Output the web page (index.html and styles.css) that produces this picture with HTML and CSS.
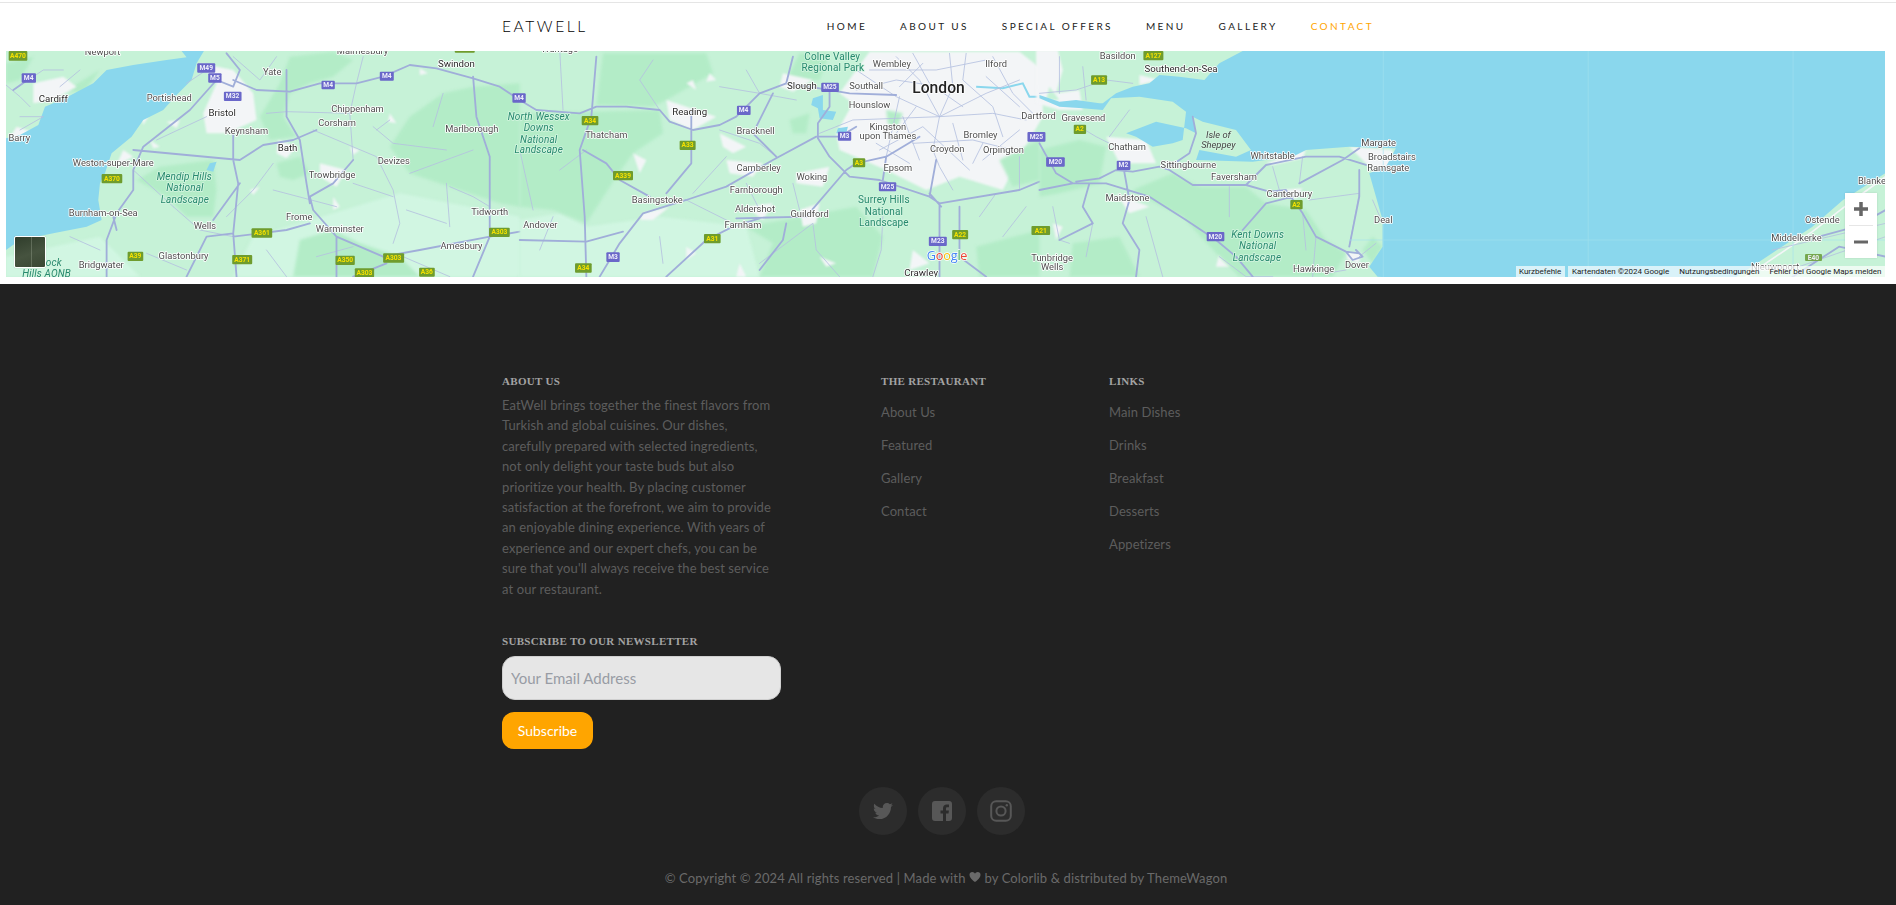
FILE: index.html
```html
<!DOCTYPE html>
<html lang="en">
<head>
<meta charset="utf-8">
<title>EatWell - Contact</title>
<link rel="stylesheet" href="styles.css">
</head>
<body>
<header class="site-header">
  <div class="header-inner">
    <a class="logo" href="#">EATWELL</a>
    <nav class="main-nav">
      <a href="#">Home</a>
      <a href="#">About Us</a>
      <a href="#">Special Offers</a>
      <a href="#">Menu</a>
      <a href="#">Gallery</a>
      <a class="active" href="#">Contact</a>
    </nav>
  </div>
</header>

<section class="map-section">
  <div class="map">
    <svg class="map-art" viewBox="6 51 1880 226" preserveAspectRatio="none" xmlns="http://www.w3.org/2000/svg">
      <rect class="land" x="6" y="51" width="1880" height="226"/>

      <!-- west -->
      <g transform="translate(0,50) scale(.33333)">
        <path class="pale" d="M700 680L760 560 900 520 1200 430 1560 500 1560 680Z M18 620L300 560 420 680 18 680Z"/>
        <path class="hill" d="M870 20L1000 5 1060 30 1000 80 930 100 870 130 850 200 890 260 810 270 780 200 840 100Z M1170 290L1230 200 1330 130 1420 110 1560 100 1560 470 1500 460 1350 410 1230 370Z M410 390L480 350 640 330 650 420 640 500 560 500 500 440Z M900 570L1000 540 1080 580 1200 620 1260 680 880 680Z M830 340L900 320 930 370 880 390 840 380Z M18 40L100 20 60 90 18 100Z M200 120L300 60 250 130Z"/>
        <path class="urban" d="M600 40L700 60 760 130 770 210 680 250 620 250 610 190 650 100Z M100 100L190 80 230 110 160 150 100 160Z M50 230L110 250 60 270 30 260Z M835 270L890 290 860 325 830 310Z M960 340L1040 360 1010 410 960 380Z M500 215L540 210 530 235Z M1050 290L1080 300 1060 315Z M1170 190L1190 220 1165 215Z M370 300L400 320 350 345Z M750 420L780 410 760 435Z M420 190L445 200 430 225Z M450 270L480 290 460 295Z M1000 440L1020 470 1000 480Z M1260 55L1285 70 1260 75Z"/>
        <path class="sea" d="M18 265L60 255 115 225 135 170 195 145 280 100 320 60 400 45 500 30 560 22 545 3 612 3 590 40 575 90 530 135 490 180 430 210 395 260 335 310 315 370 300 400 295 450 305 510 260 530 160 550 60 570 18 600Z M630 340L650 335 640 365 620 360Z"/>
        <path class="t" d="M40 120L130 60 190 60M18 105L60 140 90 170M180 110L240 60M1090 20L1070 100 1050 190 1060 330M800 190L860 185 1050 190M940 240L1130 320 1180 420 1200 520 1180 580M1170 210L1130 240M520 470L600 540 700 560M400 360L520 470M820 420L1010 470M1420 300L1230 370M1350 410L1420 440 1470 470M1210 620L1350 680M440 610L560 660M210 560L300 600M1330 130L1300 230M1340 400L1350 530M60 200L130 200 60 240M560 100L620 60M700 20L780 90 830 20M470 270L620 200M820 340L760 420 680 500M1120 230L1180 280 1340 300M1060 400L1180 440M1220 480L1340 520M950 620L1060 590M800 600L860 680"/>
        <path class="r" d="M40 120L90 85M700 90L770 120 870 125 960 100 1070 100 1150 80 1230 45 1310 55 1420 85 1500 110 1560 150M680 10L720 60 700 110 650 90 570 180 430 290 400 360 400 420 350 490 320 570 320 680M1060 330L1000 400 930 440 940 480 1010 560 1150 620 1260 600 1470 560 1560 545M860 60L860 200 900 270 920 400 930 460M700 250L700 330 715 400 700 550 710 680M640 510L720 400M400 300L720 330 790 285 880 270 950 240M700 560L860 540 930 520M1420 80L1430 200 1470 320 1470 470 1470 560 1420 680M560 680L620 560 700 550M1010 560L1010 680M1160 640L1060 680M340 500L350 540"/>
      </g>

      <!-- centre -->
      <g transform="translate(520,50) scale(.33333)">
        <path class="pale" d="M0 510L120 490 200 530 420 500 680 530 720 680 0 680Z"/>
        <path class="hill" d="M0 190L215 185 420 180 430 250 340 310 290 380 200 520 100 480 0 470Z M250 10L560 10 580 70 440 150 400 170 230 165Z M680 530L1010 470 1090 560 1060 680 720 680 760 580Z M1370 590L1560 540 1560 680 1380 680Z M800 90L840 10 930 10 900 90Z M810 210L870 190 860 250 820 250Z"/>
        <path class="urban" d="M1050 5L1500 5 1570 60 1570 200 1500 320 1450 420 1320 380 1220 420 1100 360 960 300 950 250 1000 160 960 130 1010 60Z M440 150L590 200 520 240 450 210Z M790 70L880 90 820 125 780 110Z M370 490L450 470 400 510 360 510Z M620 330L730 340 700 380 630 370Z M600 250L680 290 640 310 610 290Z M830 370L930 350 910 410 830 400Z M840 480L900 460 890 520 850 530Z M680 470L760 460 730 510Z M340 310L380 330 360 370Z M500 100L520 90 530 120Z M570 70L590 90 560 95Z M500 590L530 610 500 630Z M900 620L950 640 920 650Z M1180 600L1230 640 1170 660Z M660 640L680 680 650 680Z M1390 380L1420 350 1410 400Z"/>
        <path class="hill" d="M1100 180L1150 190 1130 240 1105 220Z M1440 330L1560 270 1560 390 1480 410Z"/>
        <path class="sea" d="M880 145L910 135 910 180 950 185 940 210 900 205 895 175 875 165Z M955 235L985 230 980 250 950 250Z"/>
        <path class="river" d="M1370 110L1450 115 1510 100 1530 140 1560 140"/>
        <path class="t" d="M120 0L130 180M400 30L360 90 420 180M680 60L720 130M1010 60L1130 140 1260 200 1400 130 1500 90M1260 200L1200 90 1130 20M1260 200L1240 300 1260 350 1300 420M1260 200L1300 110 1290 10M1140 140L1100 320M1260 200L1420 190 1520 210M1260 200L1000 210 900 250M1180 280L1360 270 1480 300M1050 60L1250 60 1400 30M1400 80L1500 170M1080 300L1210 230 1350 360M600 240L720 280 770 320M600 110L720 130 830 150M620 320L520 430M820 400L840 480M680 400L720 480M500 450L640 520M200 300L120 360M100 500L60 600M0 300L40 480M720 640L880 520 890 600 960 680M1090 500L1085 600 1060 680M1500 420L1500 320M1380 500L1430 430M1450 560L1520 470M1360 340L1390 280M420 560L430 640M1130 250L1190 170M1180 10L1230 100 1330 170M1340 10L1330 90 1420 170 1450 260M1010 120L1130 90 1260 110M1150 200L1200 330M1420 20L1480 130 1540 190M1070 280L1170 340M1300 220L1330 330M1500 240L1390 330M1210 40L1140 110"/>
        <path class="r" d="M0 150L50 180 180 190 230 170 320 170 420 180 450 215 520 240 600 225 650 200 720 130 800 100 900 115 990 130 1130 135M930 120L930 170 895 220 895 265 930 320 990 380 1080 390 1230 440 1260 460 1500 420 1560 395M240 680L300 580 370 490 500 450 620 410 760 330 890 260 960 260 1010 230M230 20L215 200 180 300 195 500 200 680M190 300L260 340 300 390 390 440M515 180L515 340 440 430M650 505L860 500 980 360 1010 340 1100 320 1200 260M1260 460L1260 680M1320 470L1320 620 1400 680M1230 430L1265 470M440 680L560 570 640 530 720 505M800 520L790 570 720 660M0 570L200 575 310 545M760 130L700 250 770 320M800 100L820 20M1100 320L1090 390M1230 440L1250 330"/>
      </g>

      <!-- east -->
      <g transform="translate(1040,50) scale(.33333)">
        <path class="urban" d="M-10 0L55 0 70 60 50 130 120 120 130 180 60 180 -10 160Z M200 260L320 270 350 340 240 340Z M300 75L360 90 300 105Z M230 430L330 470 270 490Z M930 290L1060 300 1060 350 1000 360 960 320Z M720 420L790 415 770 445 730 440Z M540 610L590 610 570 650 530 650Z M40 520L70 530 50 570Z M680 340L800 300 790 325 700 345Z M920 605L965 610 960 640 925 630Z M30 110L20 150 60 150Z"/>
        <path class="hill" d="M280 420L400 370 480 410 620 410 680 460 800 480 860 570 920 610 880 680 600 680 540 620 430 500 330 450Z M0 300L120 270 200 290 180 400 60 430 0 440Z M100 580L240 560 300 680 90 680Z M1000 560L1030 590 1000 640 970 600Z"/>
        <path class="sea" d="M610 3L2540 3 2540 369 2412 450 2319 531 2091 681 1030 681 1015 680 990 650 1030 590 1030 510 990 370 1040 350 1070 295 930 290 800 300 760 320 640 335 470 330 480 300 590 320 635 300 590 240 490 215 460 200 470 250 440 235 350 215 260 250 290 260 340 290 400 280 430 270 440 185 400 155 300 140 215 145 190 180 130 175 60 170 0 145 0 135 60 155 110 150 180 160 190 160 230 130 280 110 330 100 360 75 420 80 495 90 540 40Z"/>
        <path class="land-edge" d="M2120 681L2320 545 2430 460 2540 380"/>
        <path class="t" d="M130 50L140 150M60 20L60 130M0 130L110 120 200 90 280 100M120 230L170 260 210 280M270 180L210 260M700 350L720 420M790 320L780 400M810 450L960 430M960 430L930 590M1000 450L1030 520M320 500L370 680M90 580L60 570 40 470M130 470L160 520 140 620M570 410L570 500M790 490L800 600M830 560L820 680M610 540L680 460M860 670L920 660M1010 580L960 620M540 620L620 680 700 680M2200 600L2540 520M2280 650L2540 560"/>
        <path class="r" d="M110 395L180 385 230 360 280 365 360 350 390 360 460 405 620 405 690 425 740 420 790 490 830 560 920 605 960 610M0 280L50 370 100 400 200 400 330 440 440 510 530 570 590 620 640 680M620 405L680 345 800 320 900 320 980 345M780 400L910 330 960 295M960 360L960 440 930 590M250 340L270 450 250 520 300 600 290 680M150 400L130 470 160 520 60 570M610 540L680 460 760 440M460 200L470 250 450 310 390 350M0 420L100 400M920 605L940 630 970 620 950 600M2340 560L2450 530 2540 480M2260 681L2400 590 2540 620"/>
      </g>

      <path class="seam" d="M1384 51V277M1589 51V277M1794 51V277M1350 240H1886"/>

      <!-- labels and shields, west -->
      <g transform="translate(0,50) scale(.33333)">
        <g class="lab">
          <text x="308" y="14">Newport</text><text x="1088" y="12">Malmesbury</text><text x="817" y="75">Yate</text><text class="dk" x="1370" y="52">Swindon</text><text class="dk" x="160" y="155">Cardiff</text><text x="508" y="153">Portishead</text><text class="dk" x="667" y="197">Bristol</text><text x="1073" y="187">Chippenham</text><text x="1012" y="228">Corsham</text><text x="740" y="252">Keynsham</text><text class="dk" x="863" y="302">Bath</text><text x="1416" y="245">Marlborough</text><text x="58" y="273">Barry</text><text x="1182" y="343">Devizes</text><text x="997" y="384">Trowbridge</text><text x="340" y="348">Weston-super-Mare</text><text x="310" y="497">Burnham-on-Sea</text><text x="898" y="510">Frome</text><text x="615" y="538">Wells</text><text x="1020" y="545">Warminster</text><text x="1470" y="494">Tidworth</text><text x="1385" y="598">Amesbury</text><text x="551" y="627">Glastonbury</text><text x="304" y="653">Bridgwater</text>
          <text class="park" x="553" y="390">Mendip Hills</text><text class="park" x="555" y="424">National</text><text class="park" x="555" y="458">Landscape</text><text class="park" x="122" y="647">Quantock</text><text class="park" x="140" y="680">Hills AONB</text>
        </g>
        <g class="ra"><rect x="26" y="3" width="56" height="29"/><text x="54" y="23">A470</text></g>
        <g class="rm"><rect x="65" y="70" width="43" height="28"/><text x="86" y="90">M4</text></g>
        <g class="rm"><rect x="592" y="40" width="54" height="28"/><text x="619" y="60">M49</text></g>
        <g class="rm"><rect x="625" y="70" width="40" height="28"/><text x="645" y="90">M5</text></g>
        <g class="rm"><rect x="672" y="125" width="53" height="28"/><text x="698" y="145">M32</text></g>
        <g class="rm"><rect x="965" y="92" width="40" height="26"/><text x="985" y="111">M4</text></g>
        <g class="rm"><rect x="1140" y="65" width="42" height="27"/><text x="1161" y="85">M4</text></g>
        <g class="rm"><rect x="1538" y="130" width="40" height="28"/><text x="1558" y="150">M4</text></g>
        <g class="ra"><rect x="305" y="372" width="62" height="28"/><text x="336" y="392">A370</text></g>
        <g class="ra"><rect x="755" y="535" width="62" height="28"/><text x="786" y="555">A361</text></g>
        <g class="ra"><rect x="383" y="605" width="47" height="28"/><text x="406" y="625">A39</text></g>
        <g class="ra"><rect x="697" y="615" width="60" height="28"/><text x="727" y="635">A371</text></g>
        <g class="ra"><rect x="1007" y="617" width="58" height="28"/><text x="1036" y="637">A350</text></g>
        <g class="ra"><rect x="1150" y="610" width="63" height="28"/><text x="1181" y="630">A303</text></g>
        <g class="ra"><rect x="1065" y="655" width="58" height="27"/><text x="1094" y="675">A303</text></g>
        <g class="ra"><rect x="1258" y="653" width="47" height="27"/><text x="1281" y="672">A36</text></g>
        <g class="ra"><rect x="1468" y="533" width="62" height="28"/><text x="1499" y="553">A303</text></g>
        <g class="ra"><rect x="1365" y="-10" width="60" height="18"/></g>
      </g>

      <!-- labels and shields, centre -->
      <g transform="translate(520,50) scale(.33333)">
        <g class="lab">
          <text x="120" y="5">Wantage</text><text x="260" y="264">Thatcham</text><text class="dk" x="510" y="194">Reading</text><text x="708" y="252">Bracknell</text><text class="dk" x="847" y="118">Slough</text><text x="1040" y="117">Southall</text><text x="1117" y="52">Wembley</text><text x="1430" y="52">Ilford</text><text x="1050" y="173">Hounslow</text><text x="1105" y="240">Kingston</text><text x="1105" y="268">upon Thames</text><text x="1383" y="264">Bromley</text><text x="1283" y="305">Croydon</text><text x="1452" y="310">Orpington</text><text x="717" y="362">Camberley</text><text x="877" y="390">Woking</text><text x="1135" y="363">Epsom</text><text x="710" y="430">Farnborough</text><text x="413" y="460">Basingstoke</text><text x="706" y="485">Aldershot</text><text x="870" y="502">Guildford</text><text x="670" y="533">Farnham</text><text x="62" y="535">Andover</text><text class="dk" x="1205" y="678">Crawley</text>
          <text class="city" x="1257" y="128">London</text>
          <text class="park" x="57" y="210">North Wessex</text><text class="park" x="57" y="243">Downs</text><text class="park" x="57" y="278">National</text><text class="park" x="57" y="310">Landscape</text><text class="park plain" x="938" y="30">Colne Valley</text><text class="park plain" x="940" y="63">Regional Park</text><text class="park plain" x="1093" y="460">Surrey Hills</text><text class="park plain" x="1093" y="494">National</text><text class="park plain" x="1093" y="527">Landscape</text>
        </g>
        <g class="ra"><rect x="186" y="198" width="50" height="28"/><text x="211" y="218">A34</text></g>
        <g class="ra"><rect x="480" y="272" width="48" height="28"/><text x="504" y="292">A33</text></g>
        <g class="ra"><rect x="280" y="363" width="60" height="28"/><text x="310" y="383">A339</text></g>
        <g class="rm"><rect x="652" y="167" width="41" height="28"/><text x="672" y="187">M4</text></g>
        <g class="rm"><rect x="905" y="98" width="53" height="28"/><text x="931" y="118">M25</text></g>
        <g class="rm"><rect x="955" y="245" width="40" height="27"/><text x="975" y="265">M3</text></g>
        <g class="ra"><rect x="1000" y="325" width="37" height="27"/><text x="1018" y="345">A3</text></g>
        <g class="rm"><rect x="1078" y="397" width="52" height="27"/><text x="1104" y="417">M25</text></g>
        <g class="rm"><rect x="1228" y="560" width="54" height="28"/><text x="1255" y="580">M23</text></g>
        <g class="ra"><rect x="1298" y="540" width="48" height="28"/><text x="1322" y="560">A22</text></g>
        <g class="ra"><rect x="553" y="552" width="50" height="28"/><text x="578" y="572">A31</text></g>
        <g class="rm"><rect x="260" y="607" width="40" height="29"/><text x="280" y="628">M3</text></g>
        <g class="ra"><rect x="166" y="640" width="50" height="28"/><text x="191" y="660">A34</text></g>
        <g class="rm"><rect x="1524" y="246" width="54" height="29"/><text x="1551" y="267">M25</text></g>
        <text class="gl" x="1222" y="630"><tspan class="g-b">G</tspan><tspan class="g-r">o</tspan><tspan class="g-y">o</tspan><tspan class="g-b">g</tspan><tspan class="g-g">l</tspan><tspan class="g-r">e</tspan></text>
      </g>

      <!-- labels and shields, east -->
      <g transform="translate(1040,50) scale(.33333)">
        <g class="lab">
          <text x="-3" y="208">Dartford</text><text x="132" y="212">Gravesend</text><text x="38" y="632">Tunbridge</text><text x="38" y="660">Wells</text><text x="235" y="26">Basildon</text><text class="dk" x="425" y="67">Southend-on-Sea</text><text x="263" y="300">Chatham</text><text class="isle" x="537" y="263">Isle of</text><text class="isle" x="537" y="293">Sheppey</text><text x="700" y="326">Whitstable</text><text x="447" y="355">Sittingbourne</text><text x="1018" y="287">Margate</text><text x="1058" y="329">Broadstairs</text><text x="1047" y="363">Ramsgate</text><text x="584" y="390">Faversham</text><text x="750" y="440">Canterbury</text><text x="264" y="453">Maidstone</text><text x="1032" y="520">Deal</text><text x="823" y="667">Hawkinge</text><text x="953" y="653">Dover</text>
          <text class="park" x="655" y="565">Kent Downs</text><text class="park" x="655" y="598">National</text><text class="park" x="653" y="632">Landscape</text>
          <text class="begin" x="2457" y="402">Blankenberge</text><text x="2350" y="520">Ostende</text><text x="2272" y="574">Middelkerke</text><text x="2208" y="660">Nieuwpoort</text>
        </g>
        <g class="ra"><rect x="312" y="3" width="60" height="28"/><text x="342" y="23">A127</text></g>
        <g class="ra"><rect x="155" y="76" width="48" height="28"/><text x="179" y="96">A13</text></g>
        <g class="ra"><rect x="103" y="224" width="37" height="28"/><text x="121" y="244">A2</text></g>
        <g class="rm"><rect x="20" y="322" width="56" height="28"/><text x="48" y="342">M20</text></g>
        <g class="rm"><rect x="232" y="332" width="41" height="28"/><text x="252" y="352">M2</text></g>
        <g class="ra"><rect x="753" y="450" width="37" height="28"/><text x="771" y="470">A2</text></g>
        <g class="rm"><rect x="502" y="546" width="53" height="28"/><text x="528" y="566">M20</text></g>
        <g class="ra"><rect x="-24" y="528" width="56" height="27"/><text x="4" y="548">A21</text></g>
        <g class="re"><rect x="2298" y="612" width="51" height="21"/><text x="2323" y="629">E40</text></g>
      </g>
    </svg>

    <div class="thumb"></div>

    <div class="zoom-ctl">
      <button class="zoom-btn" type="button" aria-label="Zoom in">
        <svg viewBox="0 0 14 14" width="14" height="14"><path class="zoom-ico" d="M5.250 0h3.500v5.250H14v3.500H8.750V14h-3.500V8.750H0v-3.500h5.250z"/></svg>
      </button>
      <span class="zoom-div"></span>
      <button class="zoom-btn" type="button" aria-label="Zoom out">
        <svg viewBox="0 0 14 14" width="14" height="14"><path class="zoom-ico" d="M0 5.500h14v3H0z"/></svg>
      </button>
    </div>

    <div class="attribution">
      <span class="attr-key">Kurzbefehle</span>
      <span class="attr-main">
        <span>Kartendaten ©2024 Google</span>
        <span>Nutzungsbedingungen</span>
        <span>Fehler bei Google Maps melden</span>
      </span>
    </div>
  </div>
</section>

<footer class="site-footer">
  <div class="footer-inner">
    <div class="footer-grid">
      <div class="about-col">
        <h3 class="f-title">About Us</h3>
        <p class="about-text">EatWell brings together the finest flavors from<br>Turkish and global cuisines. Our dishes,<br>carefully prepared with selected ingredients,<br>not only delight your taste buds but also<br>prioritize your health. By placing customer<br>satisfaction at the forefront, we aim to provide<br>an enjoyable dining experience. With years of<br>experience and our expert chefs, you can be<br>sure that you'll always receive the best service<br>at our restaurant.</p>
        <h3 class="f-title news-title">Subscribe to our Newsletter</h3>
        <form class="news-form">
          <input class="news-input" type="email" placeholder="Your Email Address">
          <button class="news-btn" type="button">Subscribe</button>
        </form>
      </div>
      <div class="link-col">
        <h3 class="f-title">The Restaurant</h3>
        <ul class="f-links">
          <li><a href="#">About Us</a></li>
          <li><a href="#">Featured</a></li>
          <li><a href="#">Gallery</a></li>
          <li><a href="#">Contact</a></li>
        </ul>
      </div>
      <div class="link-col">
        <h3 class="f-title">Links</h3>
        <ul class="f-links">
          <li><a href="#">Main Dishes</a></li>
          <li><a href="#">Drinks</a></li>
          <li><a href="#">Breakfast</a></li>
          <li><a href="#">Desserts</a></li>
          <li><a href="#">Appetizers</a></li>
        </ul>
      </div>
    </div>

    <div class="social">
      <a class="social-btn" href="#" aria-label="Twitter">
        <svg class="soc-ico" viewBox="0 0 512 512" width="20" height="20"><path d="M459.37 151.716c.325 4.548.325 9.097.325 13.645 0 138.72-105.583 298.558-298.558 298.558-59.452 0-114.68-17.219-161.137-47.106 8.447.974 16.568 1.299 25.34 1.299 49.055 0 94.213-16.568 130.274-44.832-46.132-.975-84.792-31.188-98.112-72.772 6.498.974 12.995 1.624 19.818 1.624 9.421 0 18.843-1.3 27.614-3.573-48.081-9.747-84.143-51.98-84.143-102.985v-1.299c13.969 7.797 30.214 12.67 47.431 13.319-28.264-18.843-46.781-51.005-46.781-87.391 0-19.492 5.197-37.36 14.294-52.954 51.655 63.675 129.3 105.258 216.365 109.807-1.624-7.797-2.599-15.918-2.599-24.04 0-57.828 46.782-104.934 104.934-104.934 30.213 0 57.502 12.67 76.67 33.137 23.715-4.548 46.456-13.32 66.599-25.34-7.798 24.366-24.366 44.833-46.132 57.827 21.117-2.273 41.584-8.122 60.426-16.243-14.292 20.791-32.161 39.308-52.628 54.253z"/></svg>
      </a>
      <a class="social-btn" href="#" aria-label="Facebook">
        <svg class="soc-ico" viewBox="0 0 20 20" width="20" height="20"><path d="M3 0h14a3 3 0 0 1 3 3v14a3 3 0 0 1-3 3h-3v-7.500h2.500l.4-3H14V7.700c0-.9.300-1.400 1.500-1.400H17V3.600c-.3 0-1.200-.1-2.200-.1-2.300 0-3.800 1.400-3.800 3.900v2.100H8.500v3H11V20H3a3 3 0 0 1-3-3V3a3 3 0 0 1 3-3z"/></svg>
      </a>
      <a class="social-btn" href="#" aria-label="Instagram">
        <svg class="soc-line" viewBox="0 0 22 22" width="22" height="22"><rect x="1.200" y="1.200" width="19.600" height="19.600" rx="5"/><circle cx="11" cy="11" r="4.600"/><circle class="soc-dot" cx="16.800" cy="5.200" r="1.200"/></svg>
      </a>
    </div>

    <p class="copyright">© Copyright © 2024 All rights reserved | Made with <svg class="heart" viewBox="0 0 24 24" width="12" height="12"><path d="M12 22S1 15 1 7.500C1 4 3.500 2 6.500 2 9 2 11 3.500 12 5.500 13 3.500 15 2 17.500 2 20.500 2 23 4 23 7.500 23 15 12 22 12 22z"/></svg> by Colorlib &amp; distributed by ThemeWagon</p>
  </div>
</footer>
</body>
</html>
```
FILE: styles.css
```css
* { box-sizing: border-box; }
html, body { margin: 0; padding: 0; }
body { background: #fff; font-family: "Lato", "Open Sans", sans-serif; overflow-x: hidden; }
a { text-decoration: none; color: inherit; }

/* header */
.site-header { margin-top: 2px; border-top: 1px solid #e5e5e5; height: 49px; background: #fff; }
.header-inner { width: 892px; height: 100%; margin: 0 auto; display: flex; align-items: center; justify-content: space-between; padding-bottom: 3px; }
.logo { font-family: "Lato", sans-serif; font-weight: 300; font-size: 15.500px; letter-spacing: 2.600px; color: #000; }
.main-nav { display: flex; gap: 33px; padding-right: 20px; }
.main-nav a { font-family: "Lato", sans-serif; font-size: 10px; letter-spacing: 2.400px; text-transform: uppercase; color: #222; }
.main-nav a.active { color: #ffa500; }

/* map */
.map-section { padding: 0 11px 7px 6px; }
.map { position: relative; height: 226px; overflow: hidden; background: #c9f4da; }
.map-art { display: block; width: 100%; height: 100%; filter: blur(.55px); }
.land { fill: #c6f2d7; }
.pale { fill: #d1f6e2; filter: blur(4px); }
.hill { fill: #b3ecc7; filter: blur(4px); }
.urban { fill: #f3f5f7; filter: blur(3px); }
.sea { fill: #8ad7ed; filter: blur(1px); }
.river { fill: none; stroke: #8ad7ed; stroke-width: 6; }
.land-edge { fill: none; stroke: #f3f5f7; stroke-width: 5; }
.t { fill: none; stroke: #b4c0e0; stroke-width: 2.500; stroke-linejoin: round; stroke-linecap: round; }
.r { fill: none; stroke: #a0aed9; stroke-width: 5.500; stroke-linejoin: round; stroke-linecap: round; }
.seam { fill: none; stroke: #a3e0ef; stroke-width: 1; opacity: .6; }

.lab text { font-family: "Roboto", sans-serif; font-size: 28px; text-anchor: middle; fill: #4e4e4e; stroke: #fff; stroke-width: 5px; paint-order: stroke; stroke-linejoin: round; }
.lab text.dk { fill: #2a2a2a; font-size: 29px; }
.lab text.city { fill: #222; font-size: 47px; font-weight: 500; }
.lab text.park { fill: #27896e; font-style: italic; font-size: 30px; stroke: #d4f5e0; letter-spacing: .4px; }
.lab text.park.plain { font-style: normal; }
.lab text.isle { fill: #444; font-style: italic; stroke: #d4f5e0; }
.lab text.begin { text-anchor: start; }

.ra rect, .rm rect, .re rect { rx: 3px; }
.ra rect { fill: #6f9c2d; }
.rm rect { fill: #6a67c9; }
.re rect { fill: #76a84f; }
.ra text, .rm text, .re text { font-family: "Roboto", sans-serif; font-size: 20px; font-weight: 700; text-anchor: middle; }
.ra text { fill: #f5e100; }
.rm text, .re text { fill: #eeeefa; }
.gl { font-family: "Open Sans", sans-serif; font-size: 38px; stroke: #fff; stroke-width: 4px; paint-order: stroke; letter-spacing: -.6px; }
.g-b { fill: #4285f4; }
.g-r { fill: #ea4335; }
.g-y { fill: #fbbc05; }
.g-g { fill: #34a853; }

.thumb { position: absolute; left: 8px; top: 185px; width: 32px; height: 32px; border: 1px solid #fff; border-radius: 2px; background: linear-gradient(90deg, transparent 16px, rgba(200,210,190,.25) 16px, rgba(200,210,190,.25) 17px, transparent 17px), linear-gradient(160deg, #2f3d2b, #46533f 55%, #3a4733); box-shadow: 0 0 1px rgba(0,0,0,.3); }

.zoom-ctl { position: absolute; left: 1839px; top: 142px; width: 32px; height: 65px; background: #fff; display: flex; flex-direction: column; align-items: center; box-shadow: 0 0 2px rgba(0,0,0,.12); }
.zoom-btn { flex: 1; width: 100%; border: 0; padding: 0; background: none; display: flex; align-items: center; justify-content: center; }
.zoom-ico { fill: #666; }
.zoom-div { width: 24px; height: 1px; background: #e6e6e6; flex: none; }

.attribution { position: absolute; right: 0; bottom: 0; height: 11px; display: flex; gap: 3px; font-family: "Roboto", sans-serif; font-size: 8px; line-height: 11px; color: #222; }
.attr-key, .attr-main { background: rgba(255,255,255,.68); }
.attr-key { padding: 0 3px; width: 49px; white-space: nowrap; }
.attr-main { display: flex; gap: 10px; padding: 0 7px 0 4px; width: 317px; white-space: nowrap; justify-content: space-between; }

/* footer */
.site-footer { background: #212121; height: 621px; padding-top: 90px; }
.footer-inner { width: 892px; margin: 0 auto; }
.footer-grid { display: grid; grid-template-columns: 379px 228px 1fr; }
.f-title { margin: 0; font-family: "Liberation Serif", serif; font-weight: 700; font-size: 11px; line-height: 14px; letter-spacing: .3px; text-transform: uppercase; color: #a3a3a3; }
.about-text { margin: 7px 0 0; font-size: 13px; line-height: 20.400px; color: #5d5d5d; letter-spacing: .1px; white-space: nowrap; }
.news-title { margin-top: 35px; }
.news-form { margin-top: 8px; display: flex; flex-direction: column; align-items: flex-start; gap: 12px; }
.news-input { width: 279px; height: 44px; border: 1px solid #cfcfcf; border-radius: 13px; background: #e6e6e6; padding: 0 8px; font-family: "Lato", sans-serif; font-size: 15px; color: #333; outline: none; }
.news-input::placeholder { color: #989ca4; opacity: 1; }
.news-btn { width: 91px; height: 37px; border: 0; border-radius: 12px; background: #ffa500; color: #fff; font-family: "Lato", sans-serif; font-size: 14px; padding: 0; }
.f-links { list-style: none; margin: 13.500px 0 0; padding: 0; display: flex; flex-direction: column; gap: 13px; }
.f-links a { display: block; font-size: 13px; line-height: 20px; color: #5d5d5d; letter-spacing: .1px; }

.social { margin-top: 38px; display: flex; justify-content: center; gap: 11px; padding-right: 12px; }
.social-btn { width: 48px; height: 48px; border-radius: 50%; background: #2c2c2c; display: flex; align-items: center; justify-content: center; }
.soc-ico { fill: #575757; }
.soc-line { fill: none; stroke: #575757; stroke-width: 2; }
.soc-dot { fill: #575757; stroke: none; }

.copyright { margin: 33px 0 0; padding-right: 4px; text-align: center; font-size: 13px; line-height: 20px; color: #6a6a6a; letter-spacing: .13px; }
.heart { fill: #6a6a6a; vertical-align: 0; }
```
